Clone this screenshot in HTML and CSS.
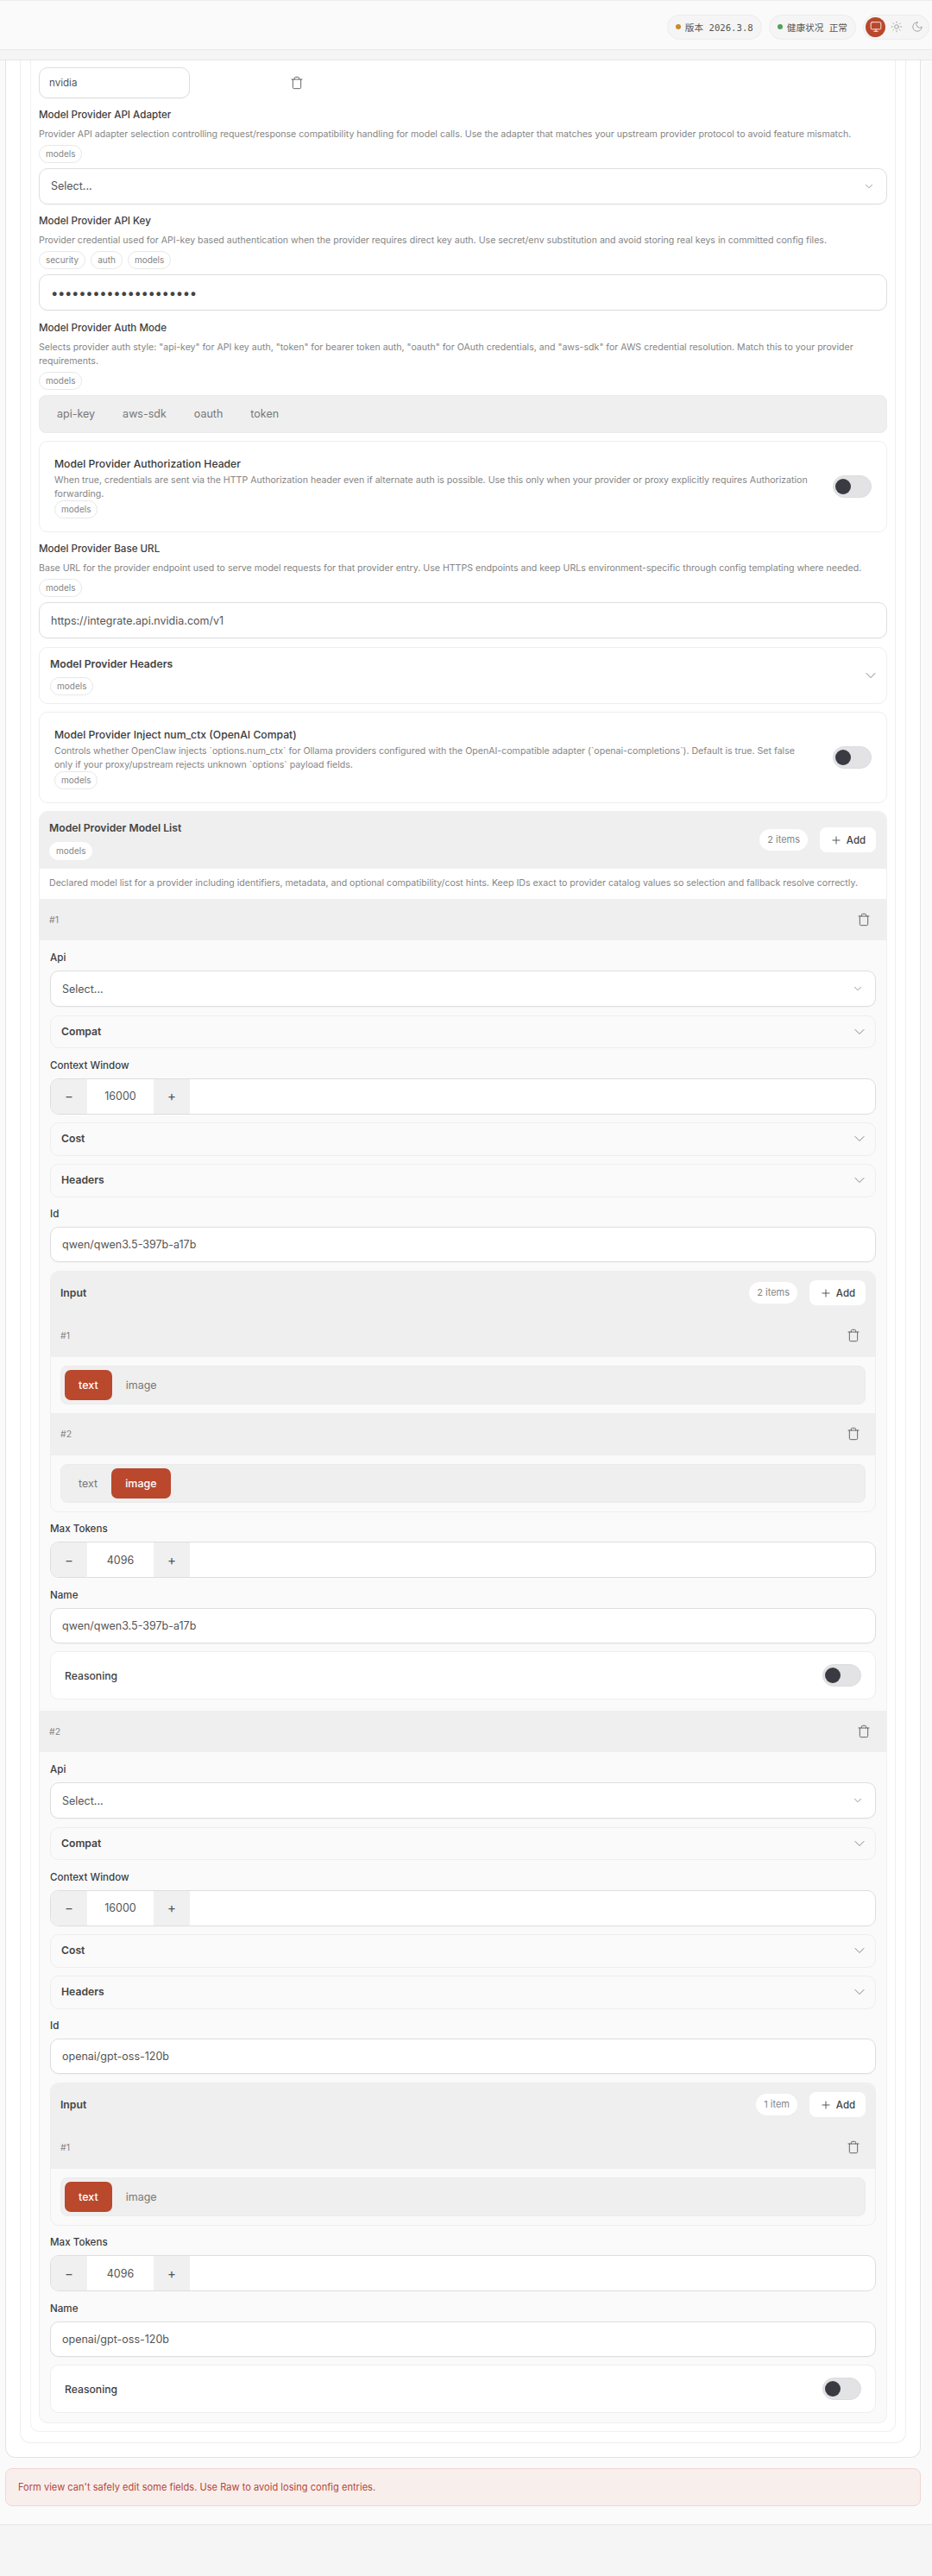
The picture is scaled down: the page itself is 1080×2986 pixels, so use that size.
FILE: index.html
```html
<!DOCTYPE html>
<html lang="zh">
<head>
<meta charset="utf-8">
<title>Config</title>
<link rel="stylesheet" href="styles.css">
</head>
<body>
<svg class="defs" width="0" height="0" aria-hidden="true">
  <symbol id="i-trash" viewBox="0 0 24 24"><path d="M3 6h18M19 6v14a2 2 0 0 1-2 2H7a2 2 0 0 1-2-2V6M8 6V4a2 2 0 0 1 2-2h4a2 2 0 0 1 2 2v2"/></symbol>
  <symbol id="i-chev" viewBox="0 0 24 24"><path d="m6 9 6 6 6-6"/></symbol>
  <symbol id="i-plus" viewBox="0 0 24 24"><path d="M5 12h14M12 5v14"/></symbol>
</svg>
<header class="topbar">
  <div class="pill"><span class="dot dot-warn"></span>版本 2026.3.8</div>
  <div class="pill"><span class="dot dot-ok"></span>健康状况 正常</div>
  <div class="theme">
    <span class="theme-btn theme-on"><svg class="ic-14" viewBox="0 0 24 24"><rect x="2" y="3" width="20" height="14" rx="2"/><path d="M8 21h8M12 17v4"/></svg></span>
    <span class="theme-btn"><svg class="ic-14" viewBox="0 0 24 24"><circle cx="12" cy="12" r="4"/><path d="M12 2v2M12 20v2M4.9 4.9l1.4 1.4M17.7 17.7l1.4 1.4M2 12h2M20 12h2M6.3 17.7l-1.4 1.4M19.1 4.9l-1.4 1.4"/></svg></span>
    <span class="theme-btn"><svg class="ic-14" viewBox="0 0 24 24"><path d="M12 3a6 6 0 0 0 9 9 9 9 0 1 1-9-9Z"/></svg></span>
  </div>
</header>
<div class="strip"></div>
<main class="main">
  <section class="shell-a">
    <div class="shell-b">
      <div class="shell-c">
        <div class="key-row">
          <div class="control control-key">nvidia</div>
          <button class="icon-btn"><svg class="ic-16"><use href="#i-trash"/></svg></button>
        </div>

        <div class="field">
          <div class="label">Model Provider API Adapter</div>
          <div class="help">Provider API adapter selection controlling request/response compatibility handling for model calls. Use the adapter that matches your upstream provider protocol to avoid feature mismatch.</div>
          <div class="tags"><span class="tag">models</span></div>
          <div class="control control-select"><span>Select...</span><svg class="ic-14"><use href="#i-chev"/></svg></div>
        </div>

        <div class="field">
          <div class="label">Model Provider API Key</div>
          <div class="help">Provider credential used for API-key based authentication when the provider requires direct key auth. Use secret/env substitution and avoid storing real keys in committed config files.</div>
          <div class="tags"><span class="tag">security</span><span class="tag">auth</span><span class="tag">models</span></div>
          <div class="control control-secret">•••••••••••••••••••••</div>
        </div>

        <div class="field">
          <div class="label">Model Provider Auth Mode</div>
          <div class="help">Selects provider auth style: "api-key" for API key auth, "token" for bearer token auth, "oauth" for OAuth credentials, and "aws-sdk" for AWS credential resolution. Match this to your provider requirements.</div>
          <div class="tags"><span class="tag">models</span></div>
          <div class="seg"><span class="seg-btn">api-key</span><span class="seg-btn">aws-sdk</span><span class="seg-btn">oauth</span><span class="seg-btn">token</span></div>
        </div>

        <div class="toggle-card">
          <div class="toggle-copy">
            <div class="toggle-title">Model Provider Authorization Header</div>
            <div class="toggle-help">When true, credentials are sent via the HTTP Authorization header even if alternate auth is possible. Use this only when your provider or proxy explicitly requires Authorization forwarding.</div>
            <div class="tags-flush"><span class="tag">models</span></div>
          </div>
          <span class="switch"><span class="knob"></span></span>
        </div>

        <div class="field">
          <div class="label">Model Provider Base URL</div>
          <div class="help">Base URL for the provider endpoint used to serve model requests for that provider entry. Use HTTPS endpoints and keep URLs environment-specific through config templating where needed.</div>
          <div class="tags"><span class="tag">models</span></div>
          <div class="control">https://integrate.api.nvidia.com/v1</div>
        </div>

        <div class="collapse collapse-tall">
          <div>
            <div class="collapse-title">Model Provider Headers</div>
            <div class="tags-collapse"><span class="tag">models</span></div>
          </div>
          <svg class="chev"><use href="#i-chev"/></svg>
        </div>

        <div class="toggle-card">
          <div class="toggle-copy">
            <div class="toggle-title">Model Provider Inject num_ctx (OpenAI Compat)</div>
            <div class="toggle-help">Controls whether OpenClaw injects `options.num_ctx` for Ollama providers configured with the OpenAI-compatible adapter (`openai-completions`). Default is true. Set false only if your proxy/upstream rejects unknown `options` payload fields.</div>
            <div class="tags-flush"><span class="tag">models</span></div>
          </div>
          <span class="switch"><span class="knob"></span></span>
        </div>

        <div class="list-box">
          <div class="list-head">
            <div>
              <div class="collapse-title">Model Provider Model List</div>
              <div class="tags-head"><span class="tag tag-plain">models</span></div>
            </div>
            <div class="list-actions">
              <span class="count">2 items</span>
              <button class="add-btn"><svg class="ic-14"><use href="#i-plus"/></svg>Add</button>
            </div>
          </div>
          <div class="list-help">Declared model list for a provider including identifiers, metadata, and optional compatibility/cost hints. Keep IDs exact to provider catalog values so selection and fallback resolve correctly.</div>

          <div class="item-head"><span class="item-num">#1</span><button class="icon-btn"><svg class="ic-16"><use href="#i-trash"/></svg></button></div>
          <div class="item-body">
            <div class="sub-field"><div class="sub-label">Api</div><div class="control control-select"><span>Select...</span><svg class="ic-14"><use href="#i-chev"/></svg></div></div>
            <div class="collapse"><span class="collapse-title">Compat</span><svg class="chev"><use href="#i-chev"/></svg></div>
            <div class="sub-field"><div class="sub-label">Context Window</div><div class="stepper"><span class="step-btn">−</span><span class="step-val">16000</span><span class="step-btn">+</span></div></div>
            <div class="collapse"><span class="collapse-title">Cost</span><svg class="chev"><use href="#i-chev"/></svg></div>
            <div class="collapse"><span class="collapse-title">Headers</span><svg class="chev"><use href="#i-chev"/></svg></div>
            <div class="sub-field"><div class="sub-label">Id</div><div class="control control-sm">qwen/qwen3.5-397b-a17b</div></div>
            <div class="input-box">
              <div class="input-head">
                <span class="collapse-title">Input</span>
                <div class="list-actions"><span class="count">2 items</span><button class="add-btn"><svg class="ic-14"><use href="#i-plus"/></svg>Add</button></div>
              </div>
              <div class="item-head item-head-sm"><span class="item-num">#1</span><button class="icon-btn"><svg class="ic-16"><use href="#i-trash"/></svg></button></div>
              <div class="input-row"><div class="seg seg-sm"><span class="seg-btn seg-on">text</span><span class="seg-btn">image</span></div></div>
              <div class="item-head item-head-sm"><span class="item-num">#2</span><button class="icon-btn"><svg class="ic-16"><use href="#i-trash"/></svg></button></div>
              <div class="input-row"><div class="seg seg-sm"><span class="seg-btn">text</span><span class="seg-btn seg-on">image</span></div></div>
            </div>
            <div class="sub-field"><div class="sub-label">Max Tokens</div><div class="stepper"><span class="step-btn">−</span><span class="step-val">4096</span><span class="step-btn">+</span></div></div>
            <div class="sub-field"><div class="sub-label">Name</div><div class="control control-sm">qwen/qwen3.5-397b-a17b</div></div>
            <div class="reason"><span class="reason-label">Reasoning</span><span class="switch"><span class="knob"></span></span></div>
          </div>

          <div class="item-head"><span class="item-num">#2</span><button class="icon-btn"><svg class="ic-16"><use href="#i-trash"/></svg></button></div>
          <div class="item-body">
            <div class="sub-field"><div class="sub-label">Api</div><div class="control control-select"><span>Select...</span><svg class="ic-14"><use href="#i-chev"/></svg></div></div>
            <div class="collapse"><span class="collapse-title">Compat</span><svg class="chev"><use href="#i-chev"/></svg></div>
            <div class="sub-field"><div class="sub-label">Context Window</div><div class="stepper"><span class="step-btn">−</span><span class="step-val">16000</span><span class="step-btn">+</span></div></div>
            <div class="collapse"><span class="collapse-title">Cost</span><svg class="chev"><use href="#i-chev"/></svg></div>
            <div class="collapse"><span class="collapse-title">Headers</span><svg class="chev"><use href="#i-chev"/></svg></div>
            <div class="sub-field"><div class="sub-label">Id</div><div class="control control-sm">openai/gpt-oss-120b</div></div>
            <div class="input-box">
              <div class="input-head">
                <span class="collapse-title">Input</span>
                <div class="list-actions"><span class="count">1 item</span><button class="add-btn"><svg class="ic-14"><use href="#i-plus"/></svg>Add</button></div>
              </div>
              <div class="item-head item-head-sm"><span class="item-num">#1</span><button class="icon-btn"><svg class="ic-16"><use href="#i-trash"/></svg></button></div>
              <div class="input-row"><div class="seg seg-sm"><span class="seg-btn seg-on">text</span><span class="seg-btn">image</span></div></div>
            </div>
            <div class="sub-field"><div class="sub-label">Max Tokens</div><div class="stepper"><span class="step-btn">−</span><span class="step-val">4096</span><span class="step-btn">+</span></div></div>
            <div class="sub-field"><div class="sub-label">Name</div><div class="control control-sm">openai/gpt-oss-120b</div></div>
            <div class="reason"><span class="reason-label">Reasoning</span><span class="switch"><span class="knob"></span></span></div>
          </div>
        </div>
      </div>
    </div>
  </section>
  <div class="alert">Form view can't safely edit some fields. Use Raw to avoid losing config entries.</div>
</main>
</body>
</html>
```
FILE: styles.css
```css
* { box-sizing: border-box; }
html, body { margin: 0; padding: 0; }
body { background: #f5f5f5; color: #3f3f3f; font-family: Inter, "Noto Sans CJK SC", sans-serif; font-size: 12.5px; min-height: 2986px; }
svg { display: block; fill: none; stroke: currentColor; stroke-width: 1.5; stroke-linecap: round; stroke-linejoin: round; flex: none; }
.defs { position: absolute; }
button { font: inherit; border: 0; background: none; padding: 0; color: inherit; }
.ic-14 { width: 14px; height: 14px; }
.ic-16 { width: 16px; height: 16px; }

.topbar { height: 58px; background: #fafafa; border-bottom: 1px solid #e9e9e9; border-top: 1px solid #ededed; display: flex; justify-content: flex-end; align-items: center; gap: 8px; padding: 4px 3px 0 0; }
.strip { height: 12px; background: #f5f5f5; border-bottom: 1px solid #e6e6e6; }
.pill { height: 29px; border: 1px solid #ececec; background: #f5f5f5; border-radius: 15px; display: flex; align-items: center; gap: 5px; padding: 0 9px; font-family: "DejaVu Sans Mono", "Noto Sans CJK SC", monospace; font-size: 10.65px; color: #555; }
.dot { width: 6px; height: 6px; border-radius: 50%; }
.dot-warn { background: #c98a2e; }
.dot-ok { background: #4fa35a; }
.theme { height: 29px; width: 77px; border: 1px solid #ececec; background: #f5f5f5; border-radius: 15px; display: flex; align-items: center; gap: 1px; padding: 0 2px; }
.theme-btn { width: 23px; height: 23px; border-radius: 50%; display: flex; align-items: center; justify-content: center; color: #999; }
.theme-on { background: #b9472b; color: #fff; }

.main { background: #fafafa; border-bottom: 1px solid #e6e6e6; padding: 0 13px 21px 6px; }
.shell-a { background: #fff; border: 1px solid #e3e3e3; border-top: 0; border-radius: 0 0 12px 12px; padding: 0 16px 16px; }
.shell-b { border: 1px solid #eeeeee; border-top: 0; border-radius: 0 0 12px 12px; padding: 0 11px 12px; }
.shell-c { border: 1px solid #f0f0f0; border-top: 0; border-radius: 0 0 10px 10px; padding: 8px 9px 9px; display: flex; flex-direction: column; gap: 9.5px; }

.key-row { display: flex; align-items: center; gap: 116px; height: 35px; }
.icon-btn { color: #666; display: block; }

.field { display: flex; flex-direction: column; }
.label { height: 20px; line-height: 20px; font-size: 11.6px; font-weight: 500; color: #3d3d3d; }
.help { margin-top: 5px; font-size: 10.6px; line-height: 16px; color: #858585; }
.tags { display: flex; gap: 6px; margin-top: 4px; margin-bottom: 6px; }
.tags-flush { display: flex; margin-top: -1px; }
.tags-collapse { display: flex; margin-top: 5px; }
.tags-head { display: flex; margin-top: 6px; }
.tag { height: 21px; line-height: 19px; border: 1px solid #e7e7e7; border-radius: 11px; padding: 0 7px; font-size: 10px; color: #858585; background: #fff; }
.tag-plain { border-color: #fff; }

.control { height: 42px; background: #fff; border: 1px solid #dedede; border-radius: 10px; padding: 0 13px; display: flex; align-items: center; font-size: 12.5px; color: #555; box-shadow: 0 1px 1px rgba(0,0,0,.03); }
.control-key { width: 175px; height: 36px; padding: 0 11px; font-size: 11.6px; flex: none; }
.control-sm { height: 41px; }
.control-select { justify-content: space-between; }
.control-select svg { color: #777; stroke-width: 1.3; }
.control-secret { letter-spacing: -0.4px; font-size: 15px; color: #444; }

.seg { height: 44px; background: #efefef; border: 1px solid #ebebeb; border-radius: 8px; padding: 4px; display: flex; align-items: center; gap: 0; }
.seg-btn { padding: 0 16px; font-size: 12.5px; color: #777; height: 35px; line-height: 35px; border-radius: 7px; }
.seg-on { background: #b9482d; color: #fff; font-weight: 500; }
.seg-sm { padding: 4px; height: 45px; }

.toggle-card { height: 105.5px; background: #fff; border: 1px solid #eeeeee; border-radius: 10px; padding: 16px 17px 15px; display: flex; align-items: center; justify-content: space-between; gap: 26px; }
.toggle-copy { flex: 1; min-width: 0; }
.toggle-title { height: 20px; line-height: 20px; margin-top: 1px; font-size: 12.2px; font-weight: 500; color: #3a3a3a; }
.toggle-help { font-size: 10.6px; line-height: 16px; color: #858585; margin-top: 1px; }
.switch { width: 45px; height: 26px; border-radius: 13px; background: #e3e3e6; border: 1px solid #dcdcdf; padding: 3px 2px; display: block; flex: none; }
.knob { display: block; width: 18px; height: 18px; border-radius: 50%; background: #3a3a42; }

.collapse { height: 38.5px; background: #fafafa; border: 1px solid #eeeeee; border-radius: 10px; padding: 0 12px; display: flex; align-items: center; justify-content: space-between; }
.collapse-tall { height: 66px; background: #fff; }
.collapse-title { display: block; height: 20px; line-height: 20px; font-size: 12.2px; font-weight: 600; color: #444; }
.chev { color: #777; width: 20px; height: 20px; margin-right: -4px; stroke-width: 1.1; }

.list-box { background: #fafafa; border: 1px solid #efefef; border-radius: 10px; overflow: hidden; }
.list-head { height: 66px; background: #efefef; padding: 9px 12px 0 11px; display: flex; justify-content: space-between; align-items: flex-start; }
.list-actions { display: flex; align-items: center; gap: 14px; }
.list-head .list-actions { margin-top: 9px; }
.count { height: 25px; line-height: 25px; background: #fff; border-radius: 13px; padding: 0 9px; font-size: 11px; color: #858585; }
.add-btn { height: 29px; width: 65px; background: #fff; border-radius: 8px; display: flex; align-items: center; justify-content: center; gap: 5px; font-size: 11.5px; font-weight: 500; color: #444; }
.list-help { height: 35px; background: #fff; padding: 0 11px; font-size: 10.6px; line-height: 34px; color: #858585; white-space: nowrap; }

.item-head { height: 48px; background: #efefef; padding: 0 18px 0 11px; display: flex; align-items: center; justify-content: space-between; }
.item-head-sm { height: 49px; padding: 0 17px 0 11px; }
.item-num { font-size: 10.5px; color: #858585; }
.item-body { padding: 10px 12px 13px; display: flex; flex-direction: column; gap: 9.5px; }
.item-body:last-child { padding-bottom: 11px; }
.sub-field { display: flex; flex-direction: column; gap: 5px; }
.sub-label { height: 20px; line-height: 20px; font-size: 11.6px; font-weight: 500; color: #3d3d3d; }

.stepper { height: 42px; background: #fff; border: 1px solid #dedede; border-radius: 10px; display: flex; overflow: hidden; }
.step-btn { width: 42px; background: #f0f0f0; display: flex; align-items: center; justify-content: center; font-size: 15px; color: #555; }
.step-val { width: 77px; display: flex; align-items: center; justify-content: center; font-size: 12.5px; color: #555; }

.input-box { background: #fafafa; border: 1px solid #eeeeee; border-radius: 10px; overflow: hidden; }
.input-head { height: 50px; background: #efefef; padding: 0 11px 0 11px; display: flex; justify-content: space-between; align-items: center; }
.input-row { padding: 10px 11px; }

.reason { height: 56px; background: #fff; border: 1px solid #eeeeee; border-radius: 10px; padding: 0 16px; display: flex; align-items: center; justify-content: space-between; }
.reason-label { font-size: 12.2px; font-weight: 500; color: #3f3f3f; }

.alert { margin-top: 12px; height: 44px; background: #f8efed; border: 1px solid #f1d6d1; border-radius: 8px; padding: 0 14px; display: flex; align-items: center; font-size: 11.1px; color: #b5483a; }
```
